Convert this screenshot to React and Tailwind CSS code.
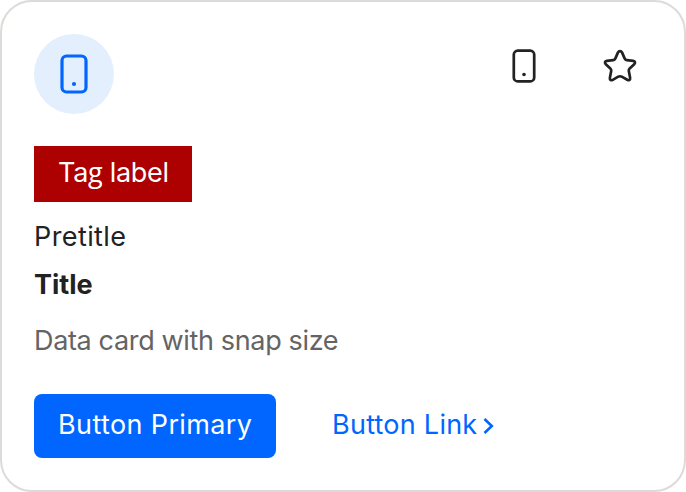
import React from "react";

function Phone({ className, strokeWidth }) {
  return (
    <svg viewBox="0 0 28 40" fill="none" className={className}>
      <rect x="2" y="2" width="24" height="36" rx="4.6" stroke="currentColor" strokeWidth={strokeWidth} />
      <circle cx="14" cy="30" r="2.1" fill="currentColor" />
    </svg>
  );
}

function Star() {
  return (
    <svg viewBox="0 0 34 34" fill="none" className="h-[34px] w-[34px]">
      <path
        d="M15 3.4C15.9 1.8 18.1 1.8 19 3.4L21.7 9.6C22.1 10.6 22.8 11.1 23.8 11.2L30.2 11.9C32.2 12.2 32.6 13.9 31.2 15.2L26.7 19.4C25.9 20.2 25.6 21 25.8 22L27.1 28.7C27.4 30.9 26 31.8 24.2 30.8L18.8 27.7C17.6 27.1 16.4 27.1 15.2 27.7L9.8 30.8C8 31.8 6.6 30.9 6.9 28.7L8.2 22C8.4 21 8.1 20.2 7.3 19.4L2.8 15.2C1.4 13.9 1.8 12.2 3.8 11.9L10.2 11.2C11.2 11.1 11.9 10.6 12.3 9.6Z"
        stroke="currentColor"
        strokeWidth="2.7"
        strokeLinejoin="round"
      />
    </svg>
  );
}

export default function App() {
  return (
    <main className="flex h-[492px] w-[686px] flex-col items-start rounded-[32px] border-2 border-[#dddad7] bg-white px-8 pt-8 font-['Inter',sans-serif] text-[27px] text-[#222]">
      <header className="flex w-full items-start justify-between">
        <div className="flex size-20 items-center justify-center rounded-full bg-[#e3effd] text-[#0066ff]">
          <Phone className="h-10 w-7" strokeWidth={3.2} />
        </div>
        <div className="flex items-start gap-[67px] pt-[15px] pr-[15px]">
          <Phone className="h-[34px] w-6" strokeWidth={3.2} />
          <Star />
        </div>
      </header>
      <div className="mt-8 h-14 w-[158px] bg-[#ad0000] pl-6 leading-[51px] tracking-[-0.3px] whitespace-nowrap text-white">
        Ta<span className="font-['Open_Sans',sans-serif]">g</span> label
      </div>
      <p className="mt-3 h-12 leading-[46px] tracking-[0.4px] whitespace-nowrap">Pretitle</p>
      <h1 className="h-12 leading-[46px] font-bold whitespace-nowrap">Title</h1>
      <p className="mt-2 h-12 leading-[46px] tracking-[-0.35px] whitespace-nowrap text-[#646464]">Data card with snap size</p>
      <div className="mt-7 flex items-start whitespace-nowrap">
        <button className="flex h-16 w-[242px] items-start rounded-lg bg-[#0066ff] pl-6 leading-[61px] tracking-[0.38px] text-white">
          Button Primary
        </button>
        <a className="ml-14 flex h-16 items-start leading-[61px] text-[#0066ff]">
          <span className="w-[145px] tracking-[0.25px]">Button Link</span>
          <svg viewBox="0 0 16 20" fill="none" className="mt-[22px] ml-1 h-5 w-4">
            <path d="M3.5 3L10.8 10L3.5 17" stroke="currentColor" strokeWidth="2.6" />
          </svg>
        </a>
      </div>
    </main>
  );
}
